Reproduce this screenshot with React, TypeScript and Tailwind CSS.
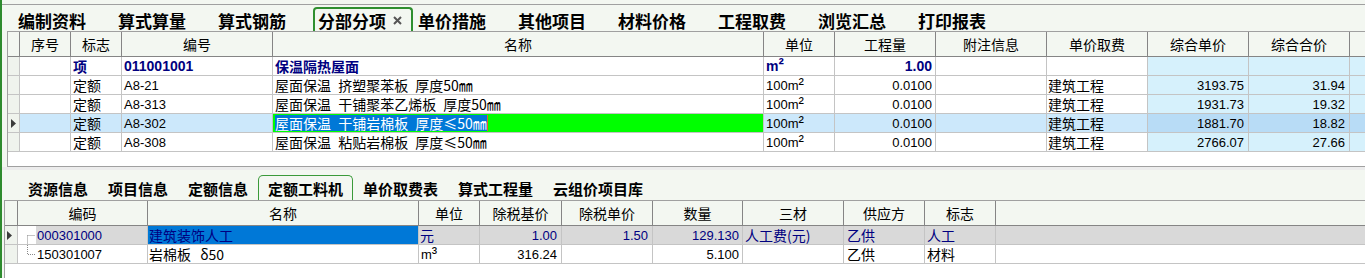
import type { ReactNode } from 'react';
import clsx from 'clsx';

const GRID = 'border-[#c4c4c4]';
const NUM = "font-['Liberation_Sans',sans-serif] text-[13px]";
const TOP_COLS = 'grid-cols-[12px_51px_51px_151px_491px_71px_101px_111px_101px_101px_101px_1fr]';
const BOTTOM_COLS = 'grid-cols-[13px_130px_271px_61px_82px_91px_90px_101px_81px_71px_1fr]';

type TopRow = {
  flag: string;
  code: string;
  name: string;
  unit: string;
  qty: string;
  fee?: string;
  price?: string;
  total?: string;
  bold?: boolean;
  selected?: boolean;
};

const topTabs = ['编制资料', '算式算量', '算式钢筋', '分部分项', '单价措施', '其他项目', '材料价格', '工程取费', '浏览汇总', '打印报表'];
const bottomTabs = ['资源信息', '项目信息', '定额信息', '定额工料机', '单价取费表', '算式工程量', '云组价项目库'];

const topHead = ['', '序号', '标志', '编号', '名称', '单位', '工程量', '附注信息', '单价取费', '综合单价', '综合合价', ''];
const bottomHead = ['', '编码', '名称', '单位', '除税基价', '除税单价', '数量', '三材', '供应方', '标志', ''];

const topRows: TopRow[] = [
  { flag: '项', code: '011001001', name: '保温隔热屋面', unit: 'm²', qty: '1.00', bold: true },
  { flag: '定额', code: 'A8-21', name: '屋面保温 挤塑聚苯板 厚度50㎜', unit: '100m²', qty: '0.0100', fee: '建筑工程', price: '3193.75', total: '31.94' },
  { flag: '定额', code: 'A8-313', name: '屋面保温 干铺聚苯乙烯板 厚度50㎜', unit: '100m²', qty: '0.0100', fee: '建筑工程', price: '1931.73', total: '19.32' },
  { flag: '定额', code: 'A8-302', name: '屋面保温 干铺岩棉板 厚度≤50㎜', unit: '100m²', qty: '0.0100', fee: '建筑工程', price: '1881.70', total: '18.82', selected: true },
  { flag: '定额', code: 'A8-308', name: '屋面保温 粘贴岩棉板 厚度≤50㎜', unit: '100m²', qty: '0.0100', fee: '建筑工程', price: '2766.07', total: '27.66' },
];

function Cell({ className, children, last }: { className?: string; children?: ReactNode; last?: boolean }) {
  return (
    <div className={clsx('flex items-center overflow-hidden whitespace-nowrap border-b', !last && 'border-r', GRID, className)}>
      {children}
    </div>
  );
}

function Head({ children, last }: { children?: ReactNode; last?: boolean }) {
  return (
    <div className={clsx('flex items-center justify-center whitespace-nowrap border-b border-[#858585]', !last && 'border-r')}>
      {children}
    </div>
  );
}

// unit like 100m² — the power sign is drawn bigger, as in the old grid font
function Unit({ text }: { text: string }) {
  return (
    <span>
      {text.slice(0, -1)}
      <span className="text-[16px] relative top-[-1px]">{text.slice(-1)}</span>
    </span>
  );
}

function Arrow() {
  return (
    <svg width="5" height="9" viewBox="0 0 5 9">
      <path d="M0 0 L5 4.5 L0 9 Z" fill="#3c3c3c" />
    </svg>
  );
}

function Tree({ first }: { first?: boolean }) {
  return (
    <svg width="18" height="18" viewBox="0 0 18 18" className="shrink-0">
      {first ? (
        <path d="M9.5 9.5 H17 M9.5 9.5 V18" stroke="#8a8a8a" strokeDasharray="1 1" fill="none" />
      ) : (
        <path d="M9.5 0 V9.5 H17" stroke="#8a8a8a" strokeDasharray="1 1" fill="none" />
      )}
    </svg>
  );
}

export default function App() {
  return (
    <div className="w-[1365px] h-[278px] overflow-hidden flex bg-[#f3f7f1] text-black text-[14px] leading-none font-['Noto_Sans_CJK_SC',sans-serif]">
      <div className="w-[2px] shrink-0 bg-[#2e8b2e]" />
      <div className="flex-1 min-w-0 flex flex-col">
        <div className="h-[4px]" />
        {/* top tabs */}
        <div className="h-[27px] border-t border-[#a0a0a0] flex items-end pl-[11px]">
          {topTabs.map((t) => {
            const active = t === '分部分项';
            return (
              <div
                key={t}
                className={clsx(
                  'w-[100px] h-[24px] shrink-0 flex items-center pl-[3px] border-2 border-b-0 rounded-t-[4px] text-[17px] font-bold',
                  active ? 'border-[#2f8f2f]' : 'border-transparent',
                )}
              >
                {t}
                {active && (
                  <svg width="9" height="9" viewBox="0 0 9 9" className="ml-[7px]">
                    <path d="M1 1 L8 8 M8 1 L1 8" stroke="#555" strokeWidth="2" />
                  </svg>
                )}
              </div>
            );
          })}
        </div>

        {/* top grid */}
        <div className="ml-[5px] h-[136px] shrink-0 border-t border-l border-b border-[#a0a0a0] bg-white flex flex-col">
          <div className={clsx('grid h-[25px] bg-[#f3f7f1]', TOP_COLS)}>
            {topHead.map((h, i) => (
              <Head key={i} last={i === topHead.length - 1}>
                {h}
              </Head>
            ))}
          </div>
          {topRows.map((r, i) => {
            const base = r.selected ? 'bg-[#cce8fb]' : 'bg-white';
            const cyan = r.selected ? 'bg-[#b8dcf6]' : 'bg-[#d6f1fc]';
            const tone = r.bold ? 'text-[#000080] font-bold' : '';
            return (
              <div key={i} className={clsx('grid h-[19px]', TOP_COLS)}>
                <Cell className="bg-[#eff3ed] pl-[3px]">{r.selected && <Arrow />}</Cell>
                <Cell className={base} />
                <Cell className={clsx(base, 'pl-[2px]', tone)}>{r.flag}</Cell>
                <Cell className={clsx(base, 'pl-[2px]', NUM, r.bold && 'text-[14px] text-[#000080] font-bold')}>{r.code}</Cell>
                <Cell className={clsx(r.selected ? 'bg-[#00ff00]' : base, 'pl-[2px] [word-spacing:4px]', tone)}>
                  {r.selected ? (
                    <>
                      <span className="bg-[#0078d7] text-white py-[1px]">{r.name}</span>
                      <span className="w-px h-[16px] bg-[#e0622a]" />
                    </>
                  ) : (
                    r.name
                  )}
                </Cell>
                <Cell className={clsx(base, 'pl-[2px]', NUM, r.bold && 'text-[14px] text-[#000080] font-bold')}>
                  <Unit text={r.unit} />
                </Cell>
                <Cell className={clsx(base, 'justify-end pr-[3px]', NUM, r.bold && 'text-[14px] text-[#000080] font-bold')}>{r.qty}</Cell>
                <Cell className={base} />
                <Cell className={clsx(base, 'pl-[1px]')}>{r.fee}</Cell>
                <Cell className={clsx(cyan, 'justify-end pr-[4px]', NUM)}>{r.price}</Cell>
                <Cell className={clsx(cyan, 'justify-end pr-[4px]', NUM)}>{r.total}</Cell>
                <Cell className={cyan} last />
              </div>
            );
          })}
        </div>

        <div className="h-[3px] shrink-0 bg-[#ececec]" />

        {/* bottom tabs */}
        <div className="h-[30px] shrink-0 flex items-end pl-[16px]">
          {bottomTabs.map((t) => {
            const active = t === '定额工料机';
            return (
              <div
                key={t}
                className={clsx(
                  'h-[25px] shrink-0 flex items-center px-[9px] border border-b-0 rounded-t-[5px] text-[15px] font-bold',
                  active ? 'border-[#3a9a3a]' : 'border-transparent',
                )}
              >
                {t}
              </div>
            );
          })}
        </div>

        {/* bottom grid */}
        <div className="ml-[2px] flex-1 border-t border-l border-[#a0a0a0] bg-white flex flex-col">
          <div className={clsx('grid h-[25px] bg-[#f3f7f1]', BOTTOM_COLS)}>
            {bottomHead.map((h, i) => (
              <Head key={i} last={i === bottomHead.length - 1}>
                {h}
              </Head>
            ))}
          </div>
          <div className={clsx('grid h-[19px] text-[#000080]', BOTTOM_COLS)}>
            <Cell className="bg-[#eff3ed] pl-[2px]">
              <Arrow />
            </Cell>
            <Cell className="bg-[#d9d9d9]">
              <div className="h-full flex items-center bg-white">
                <Tree first />
              </div>
              <span className={clsx(NUM, 'pl-px')}>000301000</span>
            </Cell>
            <Cell className="bg-[#0078d7] pl-[1px]">建筑装饰人工</Cell>
            <Cell className="bg-[#d9d9d9] pl-[1px]">元</Cell>
            <Cell className={clsx('bg-[#d9d9d9] justify-end pr-[4px]', NUM)}>1.00</Cell>
            <Cell className={clsx('bg-[#d9d9d9] justify-end pr-[4px]', NUM)}>1.50</Cell>
            <Cell className={clsx('bg-[#d9d9d9] justify-end pr-[3px]', NUM)}>129.130</Cell>
            <Cell className="bg-[#d9d9d9] pl-[2px]">人工费(元)</Cell>
            <Cell className="bg-[#d9d9d9] pl-[3px]">乙供</Cell>
            <Cell className="bg-[#d9d9d9] pl-[2px]">人工</Cell>
            <Cell className="bg-[#d9d9d9]" last />
          </div>
          <div className={clsx('grid h-[19px]', BOTTOM_COLS)}>
            <Cell className="bg-[#eff3ed]" />
            <Cell className="bg-white">
              <Tree />
              <span className={clsx(NUM, 'pl-px')}>150301007</span>
            </Cell>
            <Cell className="bg-white pl-[1px] [word-spacing:6px]">岩棉板 δ50</Cell>
            <Cell className={clsx('bg-white pl-[2px]', NUM)}>
              <Unit text="m³" />
            </Cell>
            <Cell className={clsx('bg-white justify-end pr-[4px]', NUM)}>316.24</Cell>
            <Cell className="bg-white" />
            <Cell className={clsx('bg-white justify-end pr-[3px]', NUM)}>5.100</Cell>
            <Cell className="bg-white" />
            <Cell className="bg-white pl-[3px]">乙供</Cell>
            <Cell className="bg-white pl-[2px]">材料</Cell>
            <Cell className="bg-white" last />
          </div>
        </div>
      </div>
    </div>
  );
}
